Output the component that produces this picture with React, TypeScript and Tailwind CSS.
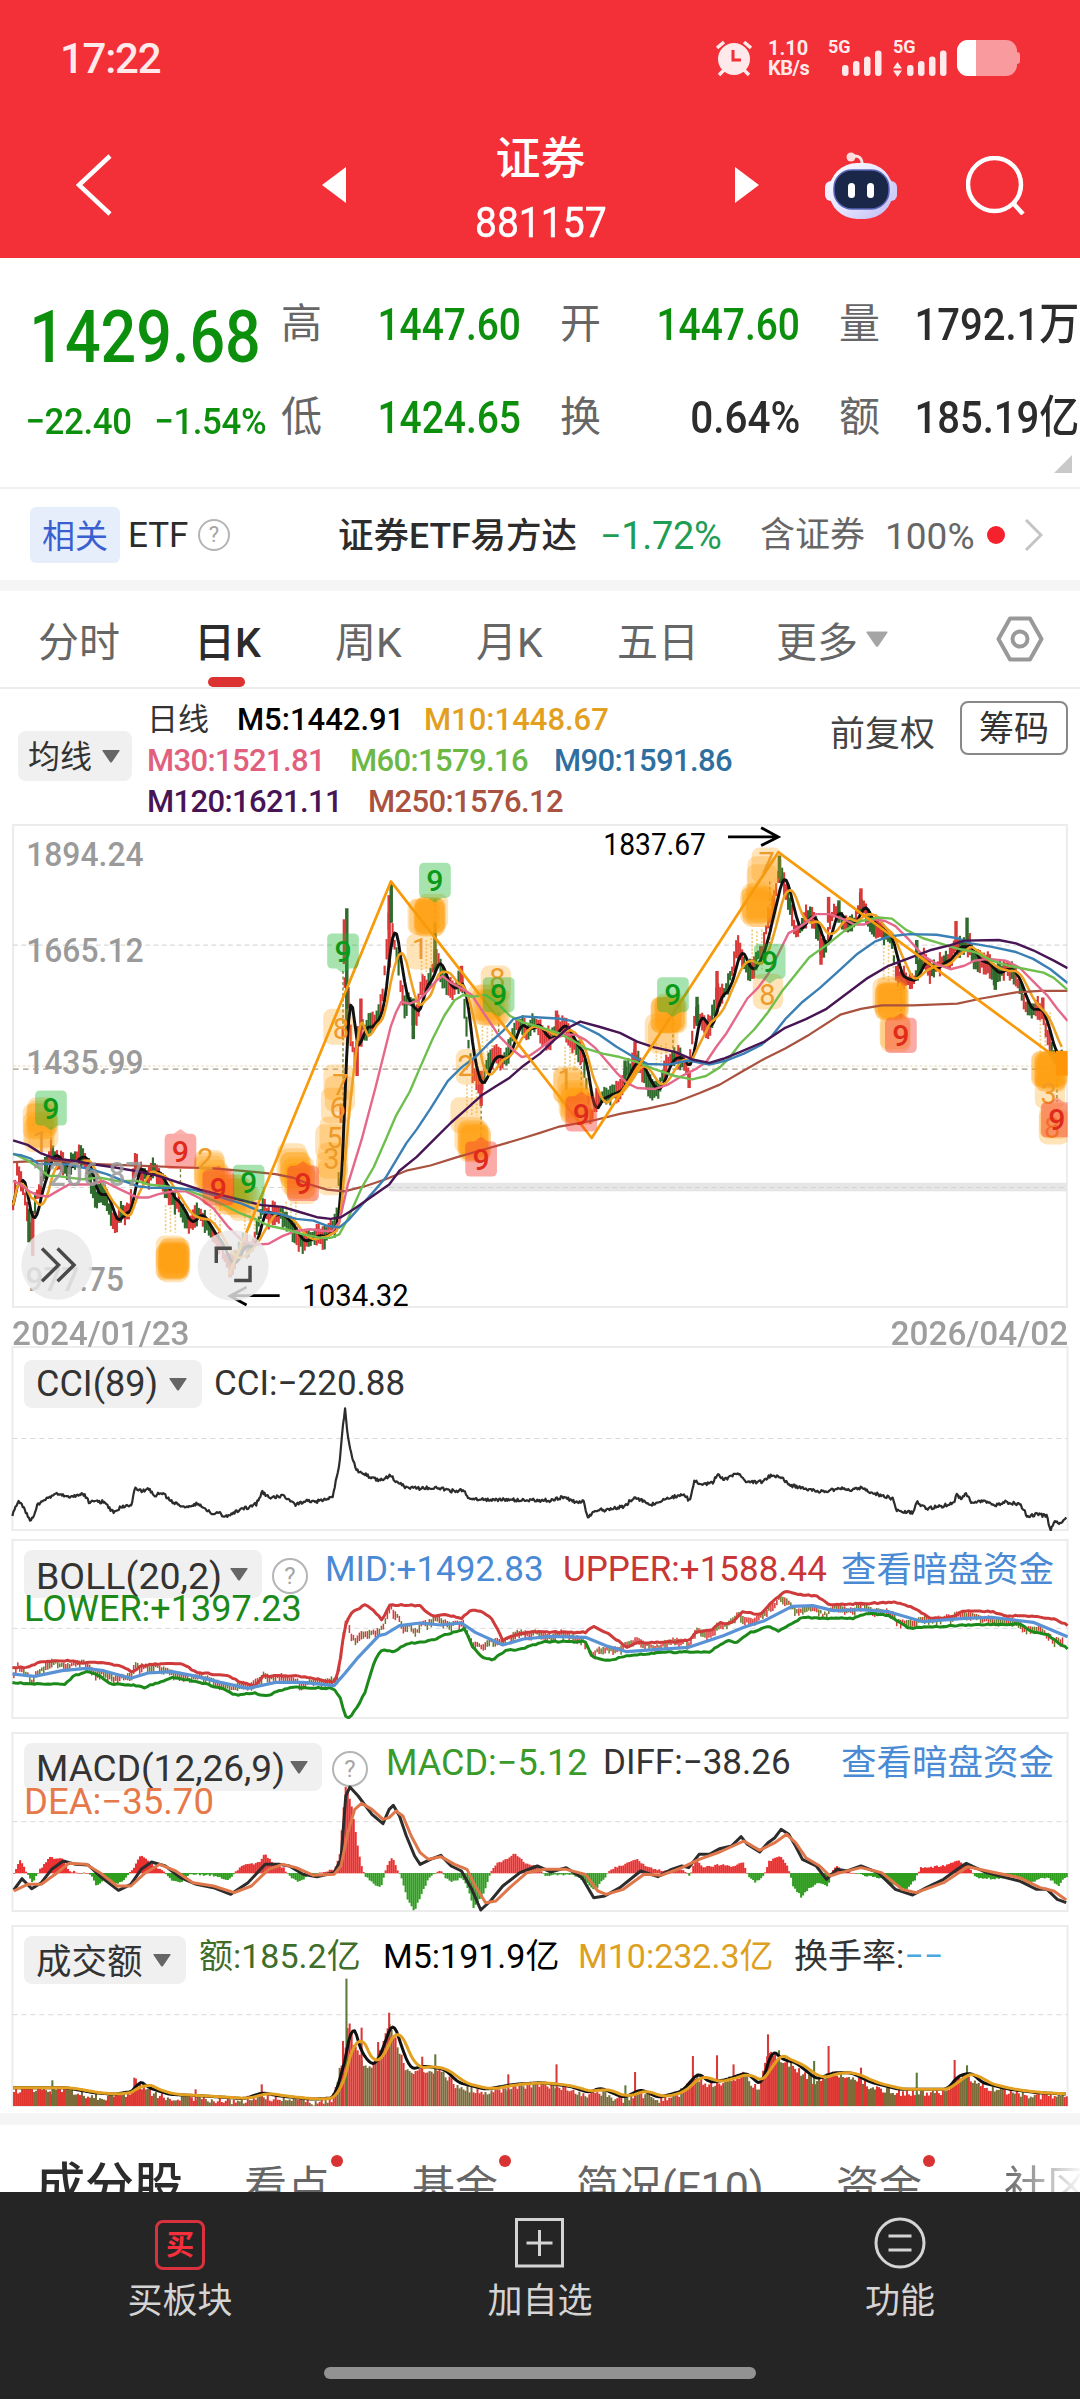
import type { ReactNode } from "react";

type Pt = [number, number];

const RED = "#d83a3a";
const GREEN = "#2f6b2c";

const parse = (raw: string): Pt[] =>
	raw
		.trim()
		.split(/\s+/)
		.map((pair) => pair.split(",").map(Number) as Pt);

// deterministic noise in -1..1
const noise = (n: number) => {
	const v = Math.sin(n * 127.1 + 11.7) * 43758.5453;
	return (v - Math.floor(v)) * 2 - 1;
};

const valueAt = (pts: Pt[], x: number) => {
	if (x <= pts[0][0]) return pts[0][1];
	for (let i = 1; i < pts.length; i++) {
		if (x <= pts[i][0]) {
			const [x0, y0] = pts[i - 1];
			const [x1, y1] = pts[i];
			return y0 + ((y1 - y0) * (x - x0)) / (x1 - x0 || 1);
		}
	}
	return pts[pts.length - 1][1];
};

const sample = (pts: Pt[], from: number, to: number, step: number, amp = 0): Pt[] => {
	const out: Pt[] = [];
	for (let x = from; x <= to; x += step) {
		out.push([x, valueAt(pts, x) + noise(x) * amp]);
	}
	return out;
};

const average = (pts: Pt[], size: number): Pt[] =>
	pts.map(([x], i) => {
		const part = pts.slice(Math.max(0, i - size + 1), i + 1);
		return [x, part.reduce((sum, p) => sum + p[1], 0) / part.length];
	});

const toPoints = (pts: Pt[]) =>
	pts.map(([x, y]) => `${x.toFixed(1)},${y.toFixed(1)}`).join(" ");

const PRICE = parse(`38,1120 50,1010 62,1060 78,1130 88,1210 95,1160 104,1100 120,1060 135,1000 150,960 165,985
180,1000 195,1015 215,990 230,970 245,985 258,1020 270,1080 282,1100 295,1080 310,1100 325,1160 338,1180 350,1140
365,1145 378,1130 388,1010 400,1010 415,1030 430,1040 445,1010 460,1040 475,1060 490,1090 505,1110 520,1115 535,1160
548,1180 562,1160 575,1140 590,1160 605,1190 620,1210 640,1230 655,1280 670,1300 690,1260 705,1230 720,1250 735,1240
750,1170 765,1120 780,1160 800,1140 820,1150 840,1170 860,1210 875,1230 890,1220 905,1220 920,1200 940,1215 955,1190
970,1180 980,1160 988,900 995,620 1003,420 1010,480 1018,620 1030,690 1040,640 1048,580 1060,630 1070,600 1085,590
1100,560 1112,500 1122,380 1132,250 1142,350 1155,400 1165,500 1175,540 1190,520 1200,580 1212,570 1222,480 1235,480
1250,460 1262,410 1272,400 1285,460 1300,480 1315,500 1330,470 1342,460 1350,560 1360,650 1370,720 1385,760 1397,790
1410,720 1425,700 1440,680 1455,700 1470,690 1485,640 1500,590 1515,600 1530,620 1545,590 1560,600 1580,630 1600,640
1620,600 1640,600 1655,640 1675,670 1690,680 1700,740 1716,880 1730,820 1745,810 1765,800 1785,790 1800,790 1815,740
1830,720 1845,690 1860,720 1880,760 1900,790 1915,780 1930,720 1945,700 1960,690 1975,700 1990,710 2000,740 2008,650
2015,590 2025,560 2040,590 2055,610 2065,590 2080,510 2095,510 2110,490 2125,440 2140,370 2155,400 2170,440 2185,440
2200,400 2215,380 2230,290 2245,250 2255,190 2265,150 2275,180 2290,230 2300,280 2310,330 2325,320 2340,280 2355,280
2370,310 2385,370 2400,370 2410,300 2420,270 2435,270 2450,300 2465,310 2480,300 2490,270 2500,240 2515,270 2530,310
2545,310 2560,320 2575,340 2590,360 2600,440 2620,460 2640,470 2655,460 2670,420 2685,400 2700,450 2715,430 2740,410
2760,410 2770,370 2785,370 2800,370 2815,360 2830,410 2850,410 2870,420 2885,450 2905,440 2925,430 2945,450 2960,480
2975,540 2990,560 3010,550 3025,560 3040,620 3055,680 3070,700 3085,690`);

const M30 = parse(`38,1050 60,1060 85,1080 110,1092 140,1095 165,1080 200,1060 260,1060 300,1050 350,1075 400,1098
430,1098 460,1088 500,1080 540,1080 580,1100 620,1130 660,1180 700,1220 740,1235 780,1232 820,1210 860,1195 900,1190
940,1195 965,1195 985,1170 1010,1060 1050,930 1090,780 1110,700 1135,600 1150,560 1165,530 1190,535 1215,525 1240,500
1265,470 1285,455 1310,475 1340,490 1370,510 1410,570 1450,630 1490,670 1515,690 1540,685 1568,665 1600,640 1640,625
1670,625 1700,640 1730,665 1760,700 1790,735 1820,765 1850,780 1900,783 1940,770 1980,745 2020,725 2050,705 2080,660
2110,620 2140,570 2170,520 2200,490 2230,450 2260,390 2290,330 2310,320 2340,300 2370,275 2410,275 2450,290 2480,305
2510,305 2540,290 2570,295 2600,310 2640,350 2680,395 2720,420 2760,435 2800,425 2830,410 2870,405 2920,410 2960,430
3000,470 3040,510 3070,550 3100,585`);

const M60 = parse(`38,970 80,990 110,1010 140,1035 165,1035 200,1040 240,1045 290,1040 340,1050 400,1050 430,1060
480,1065 540,1075 580,1090 640,1115 700,1145 740,1160 780,1180 830,1190 880,1205 930,1215 960,1215 985,1205 1010,1160
1050,1070 1085,1010 1120,930 1150,860 1190,790 1220,720 1255,640 1290,570 1320,525 1345,510 1370,515 1410,510 1440,530
1480,570 1520,590 1560,600 1620,620 1660,640 1700,665 1750,680 1800,690 1850,705 1900,725 1960,745 2010,755 2050,745
2090,720 2120,690 2150,650 2190,610 2230,560 2270,500 2310,450 2350,400 2400,365 2450,325 2500,295 2550,285 2590,288
2630,320 2680,345 2730,360 2780,375 2830,385 2880,410 2930,425 2980,435 3030,445 3060,460 3100,495`);

const M90 = parse(`38,972 60,975 90,985 110,1000 200,1002 260,1015 310,1030 360,1050 400,1065 440,1070 500,1070
560,1075 600,1085 700,1115 760,1140 810,1145 860,1160 910,1165 950,1180 985,1185 1010,1165 1050,1120 1090,1075
1120,1040 1150,990 1180,940 1210,900 1250,840 1300,760 1340,720 1380,690 1420,650 1460,615 1490,580 1520,572 1568,575
1620,578 1660,585 1700,605 1740,625 1790,660 1840,690 1880,710 1940,712 2000,700 2060,712 2110,700 2160,680 2210,655
2240,630 2280,580 2330,530 2380,490 2430,445 2490,390 2540,355 2580,340 2640,333 2720,335 2780,345 2820,360 2880,370
2950,385 3000,405 3050,435 3100,475`);

const M120 = parse(`38,932 80,945 120,970 160,985 220,992 260,1000 330,1010 400,1022 460,1035 520,1055 580,1075
680,1100 760,1120 820,1125 870,1140 920,1155 960,1160 990,1155 1030,1130 1080,1095 1130,1060 1160,1020 1210,980
1260,930 1310,880 1350,845 1400,800 1440,775 1480,750 1520,715 1568,680 1610,640 1650,605 1685,587 1740,602 1800,620
1850,645 1900,662 1960,675 2010,697 2060,707 2100,695 2150,675 2220,645 2280,605 2340,580 2400,550 2460,505 2520,460
2580,425 2640,403 2700,380 2760,365 2800,352 2900,350 2950,360 3000,380 3060,410 3100,432`);

const M250 = parse(`38,995 150,990 260,1000 400,1005 520,1010 620,1013 720,1022 800,1030 850,1040 900,1060 950,1075
1000,1080 1060,1065 1120,1045 1180,1020 1250,1005 1330,980 1400,960 1470,940 1520,925 1568,910 1620,893 1720,875
1800,855 1880,840 1960,822 2030,795 2090,770 2150,735 2220,695 2280,665 2350,625 2440,567 2500,550 2560,540 2650,540
2780,535 2850,520 2950,502 3020,498 3100,498`);

// [cx, cy, dx, dy, count]: stacked signal marks of one run
const CLUSTERS: [number, number, number, number, number][] = [
	[120, 855, -5, 60, 7],
	[500, 1265, 0, 18, 10],
	[606, 1005, 20, 50, 6],
	[655, 1080, 50, 30, 8],
	[850, 1000, 30, 60, 9],
	[990, 608, 0, 4, 1],
	[990, 770, -8, 60, 3],
	[972, 920, -6, 20, 2],
	[968, 995, -4, 45, 3],
	[1235, 290, 18, -20, 8],
	[1222, 380, 0, 8, 1],
	[1445, 475, 0, 0, 1],
	[1405, 535, 30, 20, 6],
	[1360, 725, 6, 10, 1],
	[1358, 860, 6, 6, 1],
	[1370, 920, 20, 25, 7],
	[1655, 770, 18, 55, 6],
	[1675, 830, 8, 5, 3],
	[1935, 565, 10, -5, 7],
	[1920, 620, 5, 0, 2],
	[2218, 140, -8, 40, 3],
	[2205, 240, -4, 20, 7],
	[2228, 505, 0, 0, 1],
	[2584, 515, 5, 15, 8],
	[2600, 620, 5, 0, 2],
	[3040, 730, 15, 0, 9],
	[3045, 795, 0, 0, 1],
	[3058, 882, 5, 10, 2],
];

const DIGITS: [number, number, string][] = [
	[990, 608, "8"], [988, 770, "7"], [980, 838, "6"], [972, 925, "5"], [962, 985, "3"], [1220, 375, "1"],
	[1444, 462, "8"], [1352, 715, "2"], [2226, 125, "7"], [2228, 508, "8"], [3045, 795, "3"], [3055, 895, "8"],
	[118, 935, "1"], [1642, 755, "1"], [596, 985, "2"],
];

const NINES: [number, number, "up" | "down"][] = [
	[148, 838, "up"], [722, 1054, "up"], [996, 382, "up"], [1263, 177, "up"], [1448, 509, "up"],
	[1954, 509, "up"], [2235, 412, "up"], [524, 964, "down"], [634, 1070, "down"], [880, 1057, "down"],
	[1397, 986, "down"], [1688, 855, "down"], [2616, 627, "down"], [3069, 872, "down"],
];

const STEMS: [number, number, number][] = [
	[495, 1120, 1200], [625, 1120, 1210], [1238, 345, 450], [1415, 600, 700], [1370, 770, 860], [1655, 660, 730],
	[1920, 650, 710], [2198, 320, 440], [2580, 360, 470], [3035, 560, 690], [845, 1110, 1190], [725, 1120, 1190],
];

// long dashed leaders from a badge to its candle
const LEADERS: [number, number, number][] = [
	[148, 890, 950], [996, 440, 1100], [1263, 230, 310], [524, 1015, 1060], [1397, 830, 930], [1954, 560, 690],
	[1688, 700, 800], [2616, 470, 575], [3069, 720, 820], [1448, 560, 620], [2235, 180, 360],
];

const WICKS: [number, number, number, string][] = [
	[1007, 258, 620, GREEN], [1000, 290, 420, RED], [1130, 220, 430, RED], [1136, 185, 300, GREEN], [1048, 520, 660, RED],
	[1037, 600, 745, RED], [1200, 520, 638, GREEN], [1263, 300, 440, GREEN], [1340, 425, 500, RED], [1397, 730, 832, RED],
	[95, 1140, 1268, RED], [84, 1130, 1228, GREEN], [1616, 555, 620, RED], [1844, 645, 740, RED], [1815, 700, 770, GREEN],
	[2024, 515, 600, GREEN], [2082, 440, 560, RED], [2001, 730, 780, RED], [2263, 105, 170, GREEN], [2500, 200, 260, RED],
	[2384, 350, 422, RED], [2776, 295, 360, RED], [2808, 285, 350, GREEN], [2890, 430, 495, GREEN], [3028, 517, 580, RED],
	[668, 1260, 1330, RED], [2406, 225, 300, RED], [2436, 235, 300, GREEN], [2662, 350, 420, GREEN],
];

const series = sample(PRICE, 38, 3088, 5.8, 6);

const PriceLine = ({ pts, color, width = 6.5 }: { pts: Pt[]; color: string; width?: number }) => (
	<polyline points={toPoints(pts)} fill="none" stroke={color} strokeWidth={width} strokeLinejoin="round" />
);

const AxisLabel = ({ x, y, text, width = 341 }: { x: number; y: number; text: string; width?: number }) => (
	<text x={x} y={y} textLength={width} lengthAdjust="spacingAndGlyphs" fontSize="97" fontWeight="500" fill="#9a9a9a">
		{text}
	</text>
);

const PriceChart = () => (
	<svg viewBox="0 14 3136 1404" className="block h-[484px] w-[1080px]">
		<clipPath id="plot">
			<rect x="34" y="14" width="3066" height="1404" />
		</clipPath>
		<rect x="38" y="16" width="3060" height="1400" fill="none" stroke="#ececec" strokeWidth="6" />
		<path d="M38 365H3098M38 1069H3098" stroke="#d9d9d9" strokeWidth="3" strokeDasharray="14 10" />
		<path d="M38 725H3098" stroke="#a49a86" strokeWidth="4" strokeDasharray="16 13" />
		<path d="M38 716H3098" stroke="#ecdcb4" strokeWidth="3" strokeDasharray="8 6" />
		<rect x="1130" y="1055" width="1968" height="25" fill="#e6e6e6" />
		<path d="M1130 1069H3098" stroke="#d2d2d2" strokeWidth="3" strokeDasharray="14 10" />
		<AxisLabel x={76} y={135} text="1894.24" />
		<AxisLabel x={76} y={415} text="1665.12" />
		<AxisLabel x={76} y={738} text="1435.99" />
		<AxisLabel x={74} y={1370} text="977.75" width={286} />

		<g clipPath="url(#plot)">
			{STEMS.map(([x, y0, y1]) => (
				<path
					key={x}
					d={`M${x - 14} ${y0}V${y1}M${x} ${y0 + 5}V${y1}M${x + 14} ${y0}V${y1}`}
					stroke="#f0cf85"
					strokeWidth="5"
					strokeDasharray="6 5"
				/>
			))}
			{LEADERS.map(([x, y0, y1]) => (
				<path key={x} d={`M${x} ${y0}V${y1}`} stroke="#77833a" strokeWidth="4" strokeDasharray="9 7" />
			))}
			{series.map(([x, y], i) => {
				const up = noise(Math.floor(i / 2) * 3 + 1) > -0.1;
				const half = 12 + Math.abs(noise(i * 7 + 2)) * 24;
				return (
					<rect key={x} x={x - 3.1} y={y - half} width="6.2" height={half * 2} fill={up ? RED : GREEN} />
				);
			})}
			{WICKS.map(([x, y0, y1, color]) => (
				<rect key={x} x={x - 5} y={y0} width="10" height={y1 - y0} fill={color} />
			))}

			{CLUSTERS.map(([cx, cy, dx, dy, count], c) => (
				<g key={c}>
					{Array.from({ length: count }, (_, i) => {
						const t = count > 1 ? i / (count - 1) : 0;
						const x = cx + dx * t + noise(c * 9 + i) * 9;
						const y = cy + dy * t + noise(c * 5 + i) * 9;
						return (
							<rect key={i} x={x - 44} y={y - 52} width="88" height="104" rx="24" fill="#ff9f0f" opacity="0.29" />
						);
					})}
				</g>
			))}

			<PriceLine pts={average(series, 5)} color="#111111" width={8.5} />
			<PriceLine pts={average(series, 10)} color="#f0a020" width={7.5} />
			<PriceLine pts={M250} color="#a9523f" />
			<PriceLine pts={M30} color="#e5688a" width={7} />
			<PriceLine pts={M60} color="#6fbf4f" width={7} />
			<PriceLine pts={M90} color="#3a80b4" width={7} />
			<PriceLine pts={M120} color="#471554" width={7} />
			<PriceLine pts={parse("665,1322 1135,180 1718,925 2260,95 3078,700")} color="#f79a0b" width={8} />
			<rect x="3066" y="672" width="40" height="72" fill="#ff960a" />

			{DIGITS.map(([x, y, digit]) => (
				<text key={`${x}-${y}`} x={x} y={y + 30} textAnchor="middle" fontSize="84" fill="#ee9a28">
					{digit}
				</text>
			))}
			{NINES.map(([x, y, dir]) => (
				<g key={x}>
					<rect
						x={x - 46}
						y={y - 51}
						width="92"
						height="102"
						rx="14"
						fill={dir === "up" ? "#16b52e" : "#f4382e"}
						opacity={dir === "up" ? 0.38 : 0.42}
					/>
					<path
						d={dir === "up" ? `M${x - 20} ${y + 51}h40l-20 14z` : `M${x - 20} ${y - 51}h40l-20 -14z`}
						fill={dir === "up" ? "#16b52e" : "#f4382e"}
						opacity="0.38"
					/>
					<text x={x} y={y + 31} textAnchor="middle" fontSize="88" fontWeight="500" fill={dir === "up" ? "#0a9a1a" : "#e02a1c"}>
						9
					</text>
				</g>
			))}
		</g>

		<g opacity="0.85">
			<AxisLabel x={92} y={1064} text="1206.87" width={322} />
		</g>

		<text x="184" y="104" transform="translate(1568 0)" textLength="298" lengthAdjust="spacingAndGlyphs" fontSize="90" fill="#000">
			1837.67
		</text>
		<path d="M2114 51H2260M2210 24L2260 51L2210 76" fill="none" stroke="#000" strokeWidth="8" />
		<text x="878" y="1412" textLength="309" lengthAdjust="spacingAndGlyphs" fontSize="90" fill="#000">
			1034.32
		</text>
		<path d="M812 1383H668M716 1358L668 1384L716 1410" fill="none" stroke="#000" strokeWidth="8" />

		<circle cx="165" cy="1292" r="103" fill="#e9e9e9" opacity="0.82" />
		<path d="M122 1246L170 1294L122 1341M167 1246L215 1294L167 1341" fill="none" stroke="#4a4a4a" strokeWidth="10" />
		<circle cx="677" cy="1295" r="103" fill="#e9e9e9" opacity="0.82" />
		<path d="M673 1245H628V1288M680 1339H726V1296" fill="none" stroke="#4a4a4a" strokeWidth="10" />
	</svg>
);

const Line = ({ pts, color, width = 2.5 }: { pts: Pt[]; color: string; width?: number }) => (
	<polyline
		points={toPoints(pts)}
		fill="none"
		stroke={color}
		strokeWidth={width}
		strokeLinejoin="round"
		vectorEffect="non-scaling-stroke"
	/>
);

const CCI = parse(`18,530 26,485 34,505 45,548 55,495 70,475 85,465 100,475 120,462 130,490 150,488 165,520 178,500
190,503 196,445 205,455 215,450 225,468 235,460 250,490 270,505 288,492 305,520 318,522 330,535 345,515 360,505 372,495
381,460 392,475 410,470 430,497 445,485 460,488 483,472 488,420 493,370 498,255 501,208 505,290 511,350 518,395 523,395
535,412 550,425 566,410 575,425 590,447 610,448 635,445 655,455 673,455 680,476 700,482 735,482 770,483 800,484 818,473
832,487 848,488 853,540 862,515 880,512 905,502 922,475 935,488 950,497 968,478 985,470 995,468 1001,487 1008,425
1018,440 1035,430 1041,405 1052,422 1071,400 1085,430 1105,428 1120,408 1132,412 1150,440 1175,450 1195,458 1220,448
1235,455 1250,445 1265,460 1290,475 1297,480 1302,515 1325,520 1331,490 1345,508 1370,500 1385,490 1389,465 1395,480
1402,463 1412,495 1425,485 1445,500 1460,488 1482,498 1492,533 1505,525 1520,532 1525,575 1531,550 1540,550 1549,535`);

const BOLL_UPPER = parse(`18,985 40,985 60,968 98,965 120,972 150,970 180,985 193,1000 205,980 240,972 265,975 285,1000
330,1010 350,1030 370,1040 382,1012 420,1010 450,1015 470,1025 485,1030 492,990 500,870 508,825 530,797 545,820 555,843
565,800 580,798 610,800 625,830 650,828 670,838 685,812 700,818 715,840 730,905 750,885 780,878 820,880 850,880 860,862
880,880 910,925 925,910 960,910 1000,905 1010,880 1035,870 1045,850 1060,855 1078,820 1105,825 1120,790 1140,755
1165,768 1185,770 1205,798 1240,795 1300,790 1325,805 1350,838 1380,835 1400,815 1440,818 1460,830 1500,832 1530,840
1550,858`);

const BOLL_MID = parse(`18,1005 50,1012 90,995 125,988 150,995 190,1018 215,1002 250,998 280,1010 320,1030 360,1048
400,1030 440,1030 485,1040 500,1005 520,955 550,890 560,885 580,860 610,852 640,858 670,852 690,880 730,918 760,900
800,892 850,895 880,920 910,938 950,932 1000,925 1050,890 1080,865 1110,845 1150,802 1180,800 1210,815 1250,812
1290,818 1340,848 1400,838 1440,835 1500,850 1550,893`);

const BOLL_LOWER = parse(`18,1030 45,1035 95,1035 108,1010 125,998 145,1010 160,1035 190,1038 210,1045 230,1030
250,1015 290,1030 325,1050 340,1068 370,1062 385,1072 420,1045 485,1048 495,1080 500,1125 503,1138 509,1132 517,1110
530,1060 545,960 555,930 570,940 590,915 625,905 650,885 675,870 685,920 700,955 715,962 735,935 760,928 790,908
850,908 860,955 885,965 910,950 960,940 1030,938 1055,905 1070,910 1090,880 1115,862 1130,875 1165,835 1200,838
1240,838 1260,822 1290,830 1320,868 1400,858 1480,855 1500,880 1520,885 1535,910 1550,928`);

const MACD_BARS = parse(`20,462 27,420 38,462 46,490 55,455 70,415 90,420 98,455 130,465 138,500 150,480 165,495
178,485 186,462 194,440 203,405 215,430 235,455 248,485 262,488 275,465 310,470 330,485 340,460 350,440 360,435
375,430 382,402 395,430 410,445 422,480 435,488 445,470 462,462 475,455 485,450 492,400 500,200 508,250 515,340
522,430 530,475 545,500 552,505 560,440 568,415 575,450 582,480 590,540 600,575 610,530 620,480 632,462 638,450
645,475 655,490 670,475 680,520 686,565 700,530 710,465 720,430 730,425 745,402 760,430 780,445 790,470 800,468
830,466 850,490 862,515 875,480 885,450 905,435 922,418 935,440 960,455 990,450 1000,470 1008,420 1020,445 1045,435
1060,440 1078,430 1085,475 1095,490 1108,470 1115,425 1132,412 1142,440 1150,500 1162,535 1175,505 1190,490 1200,505
1206,462 1212,440 1225,455 1255,470 1280,480 1300,500 1315,510 1328,480 1335,445 1370,440 1390,425 1405,440 1415,475
1440,480 1475,470 1490,500 1505,480 1520,475 1535,500 1548,470`);

const DIFF = parse(`20,512 32,478 46,508 60,490 75,450 92,425 110,435 128,437 145,470 172,513 190,495 205,450 220,428
240,440 262,475 285,495 310,505 335,525 360,490 385,435 405,435 420,440 440,465 460,472 485,460 495,420 502,230
508,203 520,230 540,285 556,313 565,270 571,258 580,290 590,350 602,410 610,435 625,420 640,408 655,440 670,455
685,510 698,572 712,545 730,500 755,460 780,440 800,458 822,445 845,475 862,535 878,530 900,505 930,455 955,472
975,450 990,440 1000,445 1015,405 1030,405 1045,388 1062,380 1076,352 1085,375 1103,398 1115,370 1125,355 1134,330
1145,345 1155,380 1165,420 1185,440 1200,480 1215,450 1230,455 1250,440 1275,460 1300,510 1325,527 1345,505 1370,480
1390,450 1403,432 1430,458 1460,475 1480,485 1505,510 1520,510 1535,540 1548,550`);

const DEA = parse(`20,515 40,495 60,495 80,465 100,432 125,435 145,460 170,500 190,500 210,462 232,435 255,455 280,490
310,500 340,520 365,500 390,450 410,435 430,445 455,468 485,465 495,440 505,340 515,270 525,252 540,270 556,300
565,295 575,275 585,290 597,350 610,400 622,420 640,412 660,435 678,450 690,500 705,550 720,545 740,505 765,460
790,450 822,450 850,465 868,515 880,525 905,510 935,465 960,468 990,445 1015,420 1045,398 1080,365 1103,393 1125,370
1142,345 1155,370 1170,415 1190,440 1205,470 1220,460 1250,445 1280,460 1310,510 1330,520 1370,490 1405,442 1440,458
1480,475 1510,505 1530,515 1548,542`);

const VOLUME = parse(`18,1105 60,1105 90,1105 130,1120 160,1125 190,1115 195,1080 210,1105 240,1125 290,1130 350,1138
375,1120 400,1130 450,1140 480,1135 490,1060 500,990 505,880 512,960 525,1020 540,1040 555,960 565,900 575,970
590,1050 610,1040 640,1050 660,1090 700,1110 740,1095 780,1090 820,1100 850,1120 865,1105 900,1135 925,1110 950,1135
985,1115 1008,1060 1025,1090 1050,1080 1078,1060 1100,1100 1115,990 1130,1020 1150,1030 1180,1080 1205,1060 1230,1060
1260,1090 1300,1110 1330,1110 1370,1110 1385,1070 1405,1060 1420,1090 1460,1110 1500,1120 1550,1125`);

const VOLUME_SPIKES: [number, number, string][] = [
	[503, 778, "#5c7a3c"], [565, 880, RED], [525, 925, RED], [498, 965, RED], [613, 1012, RED], [632, 1005, "#5c7a3c"],
	[808, 1035, RED], [738, 1065, RED], [922, 1058, RED], [1006, 1010, RED], [1041, 1008, RED], [1065, 1035, RED],
	[1115, 945, RED], [1131, 993, "#5c7a3c"], [1203, 980, RED], [1250, 1045, RED], [1386, 1022, RED],
	[1404, 1038, "#5c7a3c"], [1331, 1060, "#5c7a3c"], [380, 1095, RED], [195, 1075, RED], [76, 1083, "#5c7a3c"],
	[549, 968, RED], [284, 1110, RED], [908, 1098, "#5c7a3c"], [1182, 1025, "#5c7a3c"],
];

const volume = sample(VOLUME, 19, 1549, 2.9);

const Panel = ({ top, height, grid, className, header, children }: {
	top: number;
	height: number;
	grid: number;
	className: string;
	header: ReactNode;
	children: ReactNode;
}) => (
	<section className={`grid shrink-0 overflow-hidden ${className}`}>
		<svg viewBox={`0 ${top} 1568 ${height}`} preserveAspectRatio="none" className="[grid-area:1/1] h-full w-full">
			<rect x="18" y={top + 3} width="1532" height={height - 6} fill="none" stroke="#ececec" strokeWidth="2" vectorEffect="non-scaling-stroke" />
			<path d={`M18 ${grid}H1550`} stroke="#d9d9d9" strokeDasharray="5 4" vectorEffect="non-scaling-stroke" />
		</svg>
		<div className="z-10 [grid-area:1/1]">{header}</div>
		<svg viewBox={`0 ${top} 1568 ${height}`} preserveAspectRatio="none" className="z-20 [grid-area:1/1] h-full w-full">
			{children}
		</svg>
	</section>
);

const Caret = ({ className }: { className: string }) => (
	<svg viewBox="0 0 18 13" className={className} fill="currentColor">
		<path d="M1 0H17Q18 0 17.500 1L10 12Q9 13 8 12L.5 1Q0 0 1 0Z" />
	</svg>
);

const Pill = ({ className, label, children }: { className: string; label: string; children?: ReactNode }) => (
	<span className={`flex shrink-0 items-center justify-between rounded-lg bg-[#f0f0f0] text-[#333] ${className}`}>
		<span className={`whitespace-nowrap ${label}`}>{children}</span>
		<Caret className="h-[13px] w-[18px] shrink-0 text-[#666]" />
	</span>
);

const Help = ({ className }: { className: string }) => (
	<span className={`flex shrink-0 items-center justify-center rounded-full border-2 border-[#b5b5b5] text-[#a5a5a5] ${className}`}>?</span>
);

const STATS: { label: string; value: string; color: string; fit: string }[] = [
	{ label: "高", value: "1447.60", color: "text-[#0c8f0c]", fit: "scale-x-[.865]" },
	{ label: "开", value: "1447.60", color: "text-[#0c8f0c]", fit: "scale-x-[.865]" },
	{ label: "量", value: "1792.1万", color: "text-[#2c2c2c]", fit: "scale-x-[.89]" },
	{ label: "低", value: "1424.65", color: "text-[#0c8f0c]", fit: "scale-x-[.865]" },
	{ label: "换", value: "0.64%", color: "text-[#2c2c2c]", fit: "scale-x-[.9]" },
	{ label: "额", value: "185.19亿", color: "text-[#2c2c2c]", fit: "scale-x-[.89]" },
];

const Signal = ({ arrows }: { arrows?: boolean }) => (
	<svg viewBox="0 0 54 38" className="h-[38px] w-[54px] overflow-visible" fill="#ffe9ea">
		<text x="0" y="14" fontSize="18" fontWeight="700">5G</text>
		<rect x="14" y="26" width="6.500" height="11" rx="3" />
		<rect x="25" y="22" width="6.500" height="15" rx="3" />
		<rect x="36" y="17.500" width="6.500" height="19.500" rx="3" />
		<rect x="47" y="11.500" width="6.500" height="25.500" rx="3" />
		{arrows && <path d="M0 29.500L4.500 23L9 29.500ZM0 31.500L4.500 38L9 31.500Z" />}
	</svg>
);

const StatusBar = () => (
	<div className="flex h-[116px] items-center pr-[60px] pl-[60px] text-[#ffe9ea]">
		<span className="text-[42px] font-medium tracking-[-0.03em]">17:22</span>
		<svg viewBox="0 0 36 37" className="ml-auto h-[37px] w-9" fill="none" stroke="#ffe9ea" strokeWidth="3.500">
			<circle cx="18" cy="19" r="16" fill="#ffe9ea" stroke="none" />
			<path d="M1 8L8 2M35 8L28 2M8 30L3 35M28 30L33 35" />
			<path d="M17 10V20H25" stroke="#f32f38" strokeWidth="3" />
		</svg>
		<span className="ml-4 flex w-[48px] flex-col text-[20px] leading-5 font-bold">
			<span>1.10</span>
			<span className="tracking-tight">KB/s</span>
		</span>
		<span className="ml-3"><Signal /></span>
		<span className="ml-[11px]"><Signal arrows /></span>
		<span className="ml-2.5 flex h-9 w-[60px] overflow-hidden rounded-[11px] bg-[#f99a9f]">
			<span className="w-[19px] bg-white" />
		</span>
		<span className="h-3 w-[3px] rounded-r bg-[#f99a9f]" />
	</div>
);

const Robot = () => (
	<svg viewBox="0 0 72 67" className="ml-[66px] h-[67px] w-[72px]">
		<defs>
			<linearGradient id="shell" x1="0" y1="0" x2="1" y2="1">
				<stop offset="0" stopColor="#fff" />
				<stop offset="0.55" stopColor="#e4e2ff" />
				<stop offset="1" stopColor="#bcb8f2" />
			</linearGradient>
		</defs>
		<circle cx="26" cy="5" r="4.500" fill="#ffdcdc" />
		<path d="M28 4Q37 3 37 12" fill="none" stroke="#ffe4e4" strokeWidth="3" />
		<rect x="0" y="29" width="12" height="20" rx="6" fill="#f2f0ff" />
		<rect x="60" y="29" width="12" height="20" rx="6" fill="#cfcdfa" />
		<rect x="4" y="11" width="64" height="56" rx="28" fill="url(#shell)" />
		<rect x="9" y="18" width="55" height="39" rx="18" fill="#1b2748" stroke="#5864b8" strokeWidth="1.500" />
		<rect x="23" y="31" width="7" height="15" rx="3.500" fill="#fff" />
		<rect x="42" y="31" width="7" height="15" rx="3.500" fill="#fff" />
	</svg>
);

const Header = () => (
	<header className="h-[258px] shrink-0 bg-[#f32f38] text-white">
		<StatusBar />
		<div className="flex h-[138px] items-center pl-[76px]">
			<svg viewBox="0 0 36 62" className="h-[62px] w-9" fill="none" stroke="currentColor" strokeWidth="4.500">
				<path d="M34 2L3 31L34 60" />
			</svg>
			<svg viewBox="0 0 24 36" className="ml-[210px] h-9 w-6" fill="currentColor">
				<path d="M24 0V36L0 18Z" />
			</svg>
			<div className="flex w-[389px] flex-col items-center pt-3 font-medium">
				<span className="text-[45px] leading-[63px]">证券</span>
				<span className="scale-x-[.93] text-[42px] leading-[63px] font-normal [-webkit-text-stroke:.5px_white]">881157</span>
			</div>
			<svg viewBox="0 0 24 36" className="h-9 w-6" fill="currentColor">
				<path d="M0 0V36L24 18Z" />
			</svg>
			<Robot />
			<svg viewBox="0 0 59 59" className="ml-[69px] h-[59px] w-[59px]" fill="none" stroke="currentColor" strokeWidth="4.500">
				<circle cx="28.500" cy="28.500" r="26.500" />
				<path d="M47 47L57 58" />
			</svg>
		</div>
	</header>
);

const Quote = () => (
	<section className="flex h-[231px] shrink-0 border-b-2 border-[#f0f0f0]">
		<div className="w-[281px] shrink-0 text-[#0c8f0c]">
			<div className="origin-left scale-x-[.86] pt-[33px] pl-[34px] text-[73px] leading-[92px] font-medium">1429.68</div>
			<div className="mt-[17px] flex w-[276px] origin-left scale-x-[.94] gap-[26px] pl-[27px] text-[37px] leading-[44px] font-medium whitespace-nowrap">
				<span className="w-[111px] tracking-[-0.01em]">−22.40</span>
				<span className="tracking-[-0.01em]">−1.54%</span>
			</div>
		</div>
		<div className="relative flex-1">
			<div className="grid grid-cols-[240px_240px_240px] gap-x-[39px] pt-[20px]">
				{STATS.map(({ label, value, color, fit }) => (
					<div key={label} className="flex h-[93px] items-center justify-between">
						<span className="text-[41px] text-[#666]">{label}</span>
						<span className={`origin-right text-[45px] font-medium whitespace-nowrap ${color} ${fit}`}>{value}</span>
					</div>
				))}
			</div>
			<svg viewBox="0 0 18 18" className="absolute right-2 bottom-3.5 h-[18px] w-[18px]">
				<path d="M18 0V18H0Z" fill="#c9c9c9" />
			</svg>
		</div>
	</section>
);

const EtfRow = () => (
	<section className="flex h-[91px] shrink-0 items-center pl-[30px] text-[35px] whitespace-nowrap text-[#2c2c2c]">
		<span className="flex h-14 w-[90px] items-center justify-center rounded-md bg-[#e6eefb] pt-1 text-[33px] text-[#3a5fd0]">相关</span>
		<span className="ml-2 w-[62px] pt-1">ETF</span>
		<Help className="ml-2 h-8 w-8 text-[22px]" />
		<span className="ml-[108px] w-[240px] pt-1 text-[35.5px] font-medium">证券ETF易方达</span>
		<span className="ml-[22px] w-[122px] pt-1 text-[38px] tracking-[-0.01em] text-[#1f9d55]">−1.72%</span>
		<span className="ml-[38px] w-[105px] pt-1 text-[#666]">含证券</span>
		<span className="ml-5 w-[89px] pt-1 text-[37px] text-[#666]">100%</span>
		<span className="ml-[13px] h-[18px] w-[18px] rounded-full bg-[#f5222d]" />
		<svg viewBox="0 0 18 32" className="ml-5 h-8 w-[18px]" fill="none" stroke="#c4c4c4" strokeWidth="3">
			<path d="M1 1L16 16L1 31" />
		</svg>
	</section>
);

const PERIODS = [
	{ label: "分时", className: "w-[156px]" },
	{ label: "日K", className: "w-[141px]", active: true },
	{ label: "周K", className: "w-[141px]" },
	{ label: "月K", className: "w-[141px]" },
	{ label: "五日", className: "w-[159px]" },
	{ label: "更多", className: "w-[90px]" },
];

const PeriodTabs = () => (
	<nav className="flex h-[98px] shrink-0 items-center border-b-2 border-[#ececec] pl-[38px] text-[41px] text-[#666]">
		{PERIODS.map(({ label, className, active }) => (
			<span key={label} className={`flex h-full shrink-0 flex-col pt-[22px] leading-[60px] ${className} ${active ? "font-medium text-[#2c2c2c]" : ""}`}>
				{label}
				{active && <span className="mt-1 ml-[14px] h-2.5 w-[37px] rounded-full bg-[#dc3232]" />}
			</span>
		))}
		<Caret className="h-[19px] w-[22px] text-[#a5a5a5]" />
		<svg viewBox="0 0 48 46" className="ml-[108px] h-[46px] w-12" fill="none" stroke="#999" strokeWidth="4">
			<path d="M14 2.500H34L45.500 23L34 43.500H14L2.500 23Z" strokeLinejoin="round" />
			<circle cx="24" cy="23" r="7.500" />
		</svg>
	</nav>
);

const Averages = () => (
	<section className="flex h-[135px] shrink-0 pl-[18px] text-[31px] text-[#333]">
		<Pill className="mt-[42px] h-[50px] w-[114px] pr-3 pl-2.5" label="text-[32px] pt-0.5">均线</Pill>
		<div className="ml-[15px] w-[683px] pt-[10px] leading-[41px] font-medium whitespace-nowrap">
			<div className="flex">
				<span className="w-[90px] font-normal">日线</span>
				<span className="w-[187px] text-black">M5:1442.91</span>
				<span className="text-[#e3a020]">M10:1448.67</span>
			</div>
			<div className="flex tracking-[-0.02em]">
				<span className="w-[203px] text-[#e0607e]">M30:1521.81</span>
				<span className="w-[204px] text-[#6cb845]">M60:1579.16</span>
				<span className="text-[#2f6f9f]">M90:1591.86</span>
			</div>
			<div className="flex tracking-[-0.02em]">
				<span className="w-[221px] text-[#471554]">M120:1621.11</span>
				<span className="text-[#a9523f]">M250:1576.12</span>
			</div>
		</div>
		<span className="w-[130px] pt-[21px] text-[35px] leading-[50px] text-[#444]">前复权</span>
		<span className="mt-[12px] flex h-[54px] w-[108px] items-center justify-center rounded-lg border-2 border-[#888] pt-1 text-[35px]">筹码</span>
	</section>
);

const DarkFunds = () => <span className="text-[35.5px] text-[#4a8ad4]">查看暗盘资金</span>;

const Charts = () => (
	<>
		<PriceChart />
		<div className="flex h-[38px] shrink-0 justify-between px-3 pt-[6px] text-[34px] leading-[38px] font-medium text-[#9e9e9e]">
			<span className="origin-left scale-x-[.98]">2024/01/23</span>
			<span className="origin-right scale-x-[.98]">2026/04/02</span>
		</div>

		<Panel
			top={20}
			height={556}
			grid={298}
			className="h-[185px]"
			header={
				<div className="flex items-center pt-3 pl-6 text-[35px]">
					<Pill className="h-12 w-[178px] pr-[15px] pl-3" label="text-[36px]">CCI(89)</Pill>
					<span className="ml-3 text-[#333]">CCI:−220.88</span>
				</div>
			}
		>
			<Line pts={sample(CCI, 18, 1549, 1.5, 5)} color="#2c2c2c" width={2.2} />
		</Panel>

		<Panel
			top={600}
			height={540}
			grid={868}
			className="mt-2 h-[180px]"
			header={
				<div className="pl-6 text-[35px] leading-[40px] whitespace-nowrap">
					<div className="flex h-[50px] items-start pt-[11px]">
						<Pill className="h-12 w-[238px] pr-[14px] pl-3" label="pt-1 text-[37.500px]">BOLL(20,2)</Pill>
						<Help className="mt-2 ml-2.5 h-9 w-9 text-2xl" />
						<span className="ml-[17px] w-[238px] text-[#4a8ad4]">MID:+1492.83</span>
						<span className="w-[278px] text-[#c93636]">UPPER:+1588.44</span>
						<DarkFunds />
					</div>
					<div className="text-[36px] text-[#1b8a1b]">LOWER:+1397.23</div>
				</div>
			}
		>
			{series.map(([x, y], i) => (
				<rect
					key={x}
					x={x / 2}
					y={785 + (y - 190) * 0.239 - 4 - Math.abs(noise(i * 7)) * 8}
					width="2.200"
					height={10 + Math.abs(noise(i * 3)) * 18}
					fill={noise(i * 3 + 1) > 0 ? RED : "#6b7a2c"}
				/>
			))}
			<Line pts={sample(BOLL_UPPER, 18, 1550, 4, 2)} color="#cf3b3b" width={3} />
			<Line pts={sample(BOLL_LOWER, 18, 1550, 4, 2)} color="#1b8a1b" width={3} />
			<Line pts={BOLL_MID} color="#5a92d6" width={3.2} />
		</Panel>

		<Panel
			top={38}
			height={540}
			grid={307}
			className="mt-[13px] h-[180px]"
			header={
				<div className="pl-6 text-[35px] leading-[40px] whitespace-nowrap">
					<div className="flex h-[50px] items-start pt-[11px]">
						<Pill className="h-12 w-[298px] pr-[14px] pl-3" label="pt-1 text-[37px]">MACD(12,26,9)</Pill>
						<Help className="mt-2 ml-2.5 h-9 w-9 text-2xl" />
						<span className="ml-[18px] w-[217px] text-[36px] text-[#3a9a2a]">MACD:−5.12</span>
						<span className="w-[238px] text-[#333]">DIFF:−38.26</span>
						<DarkFunds />
					</div>
					<div className="text-[36.500px] text-[#e6794a]">DEA:−35.70</div>
				</div>
			}
		>
			{sample(MACD_BARS, 19, 1549, 2.9, 3).map(([x, y]) => (
				<rect
					key={x}
					x={x}
					y={Math.min(y, 461)}
					width="3"
					height={Math.max(2, Math.abs(y - 462))}
					fill={y < 462 ? "#ea3030" : "#2f9e1f"}
				/>
			))}
			<Line pts={DIFF} color="#2c2c2c" width={3} />
			<Line pts={DEA} color="#e0774a" width={3} />
		</Panel>

		<Panel
			top={617}
			height={546}
			grid={886}
			className="mt-[13px] h-[182px]"
			header={
				<div className="flex items-start pt-[11px] pl-6 text-[34px] leading-[40px] whitespace-nowrap">
					<Pill className="h-12 w-[162px] pr-[15px] pl-3" label="pt-1 text-[35.500px]">成交额</Pill>
					<span className="ml-[13px] w-[184px] text-[#3f6d2a]">额:185.2亿</span>
					<span className="w-[195px] text-black">M5:191.9亿</span>
					<span className="w-[216px] text-[#dda020]">M10:232.3亿</span>
					<span className="text-[#333]">换手率:<span className="text-[#4aa8e0]">−−</span></span>
				</div>
			}
		>
			{volume.map(([x, y], i) => {
				const top = y + 8 + noise(i * 5) * 12;
				return (
					<rect key={x} x={x} y={top} width="2.900" height={1160 - top} fill={noise(Math.floor(i / 2) * 3 + 1) > -0.2 ? "#e0352f" : "#7a6b38"} />
				);
			})}
			{VOLUME_SPIKES.map(([x, y, color]) => (
				<rect key={x} x={x - 1.5} y={y} width="3" height={1160 - y} fill={color} />
			))}
			<Line pts={average(volume, 5)} color="#111" width={3} />
			<Line pts={average(volume, 10)} color="#e3a020" width={3} />
		</Panel>
	</>
);

const SECTIONS = [
	{ label: "看点", className: "w-[168px]", dot: true },
	{ label: "基金", className: "w-[164px]", dot: true },
	{ label: "简况(F10)", className: "w-[260px]" },
	{ label: "资金", className: "w-[168px]", dot: true },
	{ label: "社区", className: "w-[100px] bg-linear-to-r from-[#666] to-transparent to-80% bg-clip-text text-transparent" },
];

const SectionTabs = () => (
	<nav className="flex h-[67px] shrink-0 overflow-hidden pt-[29px] pl-[36px] text-[43px] leading-[66px] whitespace-nowrap text-[#666]">
		<span className="w-[208px] shrink-0 text-[49px] font-medium text-[#2c2c2c]">成分股</span>
		{SECTIONS.map(({ label, className, dot }) => (
			<span key={label} className={`flex shrink-0 ${className}`}>
				{label}
				{dot && <span className="mt-px ml-px h-3 w-3 rounded-full bg-[#d83232]" />}
			</span>
		))}
	</nav>
);

const BottomBar = () => (
	<footer className="flex h-[207px] shrink-0 flex-col items-center bg-[#252525] text-[35px] text-[#d4d4d4]">
		<div className="grid w-full grid-cols-3 pt-[25px]">
			<div className="flex flex-col items-center gap-[10px]">
				<span className="mt-[3px] flex h-[50px] w-[50px] items-center justify-center rounded-lg border-[3px] border-[#d8323e] pt-0.5 text-[28px] leading-none font-bold text-[#f5303c]">买</span>
				<span className="leading-[44px]">买板块</span>
			</div>
			<div className="flex flex-col items-center gap-[11px]">
				<svg viewBox="0 0 52 52" className="h-[52px] w-[52px]" fill="none" stroke="currentColor" strokeWidth="3">
					<path d="M2.500 2.500H48.500V49H2.500ZM25.500 13V39M12.500 26H38.500" />
				</svg>
				<span className="leading-[44px]">加自选</span>
			</div>
			<div className="flex flex-col items-center gap-[11px]">
				<svg viewBox="0 0 52 52" className="h-[52px] w-[52px]" fill="none" stroke="currentColor" strokeWidth="3">
					<circle cx="26" cy="26" r="24" />
					<path d="M14.500 19H37.500M14.500 33H37.500" />
				</svg>
				<span className="leading-[44px]">功能</span>
			</div>
		</div>
		<span className="mt-[43px] h-3 w-[432px] rounded-full bg-[#929292]" />
	</footer>
);

export default function App() {
	return (
		<main className="flex h-[2400px] w-[1080px] flex-col overflow-hidden bg-white font-[Roboto,'Noto_Sans_CJK_SC',sans-serif]">
			<Header />
			<Quote />
			<EtfRow />
			<div className="h-[11px] shrink-0 bg-[#f5f5f5]" />
			<PeriodTabs />
			<Averages />
			<Charts />
			<div className="mt-[6px] h-3 shrink-0 bg-[#f5f5f5]" />
			<SectionTabs />
			<BottomBar />
		</main>
	);
}
